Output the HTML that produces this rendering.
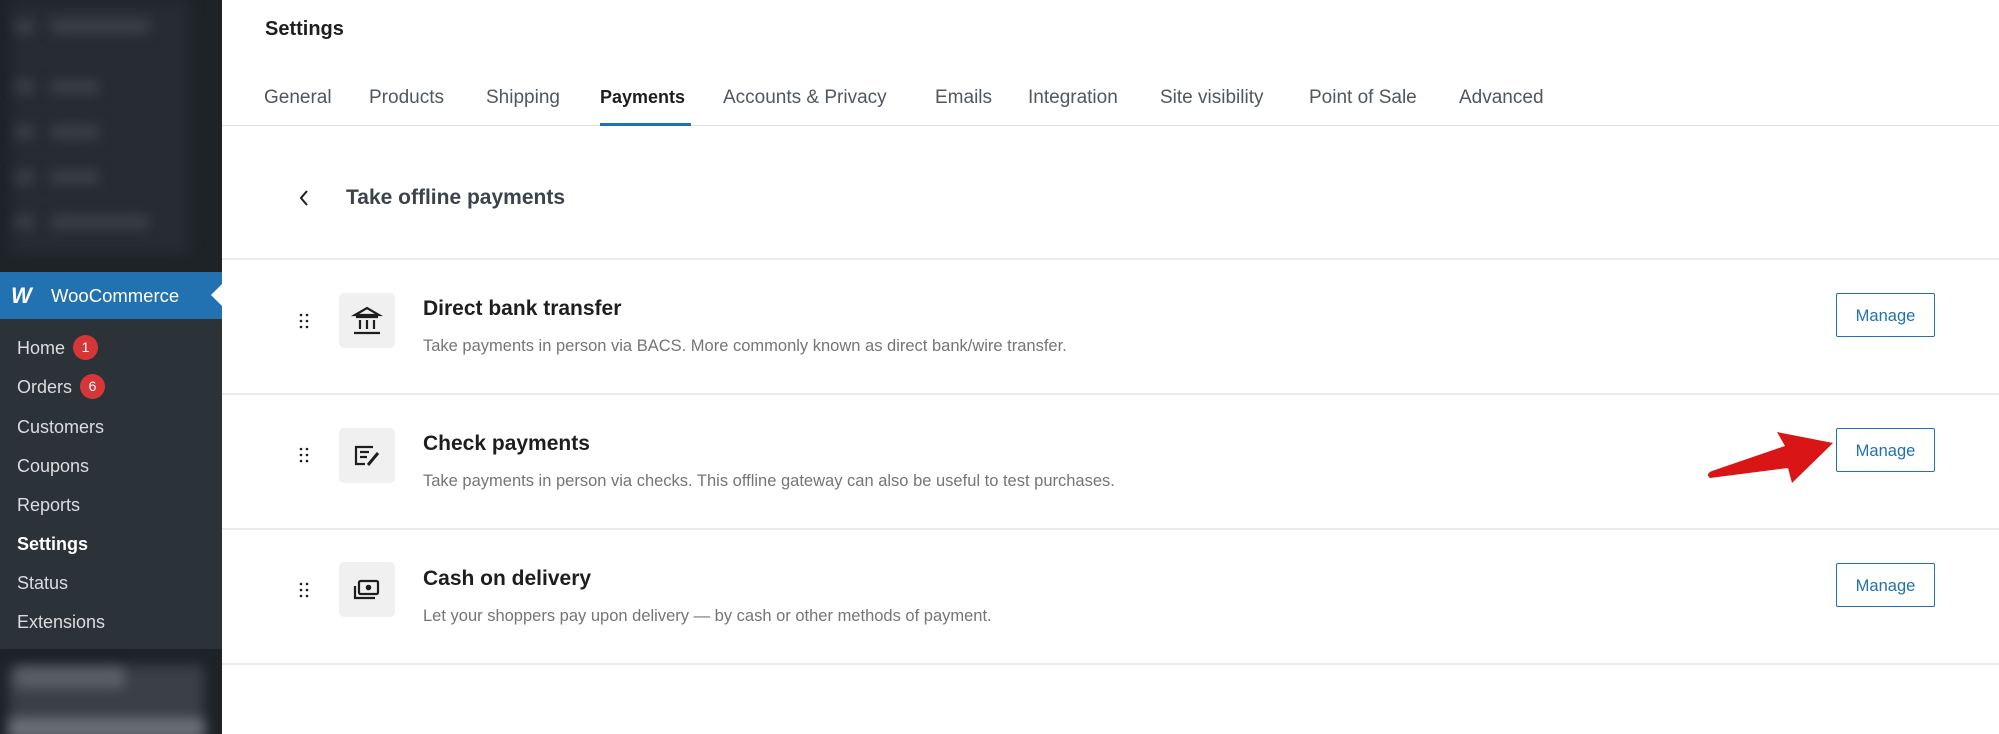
<!DOCTYPE html>
<html><head><meta charset="utf-8"><style>
*{margin:0;padding:0;box-sizing:border-box}
body{width:1999px;height:734px;overflow:hidden;background:#fff;font-family:"Liberation Sans",sans-serif;position:relative}
.abs{position:absolute;white-space:nowrap}
#sb{position:absolute;left:0;top:0;width:222px;height:734px;background:#1d2327;overflow:hidden}
.blur{position:absolute;background:#3a4046;filter:blur(6px);border-radius:6px}
#woo{position:absolute;left:0;top:272px;width:222px;height:47px;background:#2271b1;color:#fff;font-size:18.5px}
#sub{position:absolute;left:0;top:319px;width:222px;height:330px;background:#2c3338}
.mi{position:absolute;left:17px;font-size:18px;color:#dcdcde;line-height:20px;height:20px}
.badge{display:inline-block;width:25px;height:25px;border-radius:13px;background:#d63638;color:#fff;font-size:14px;text-align:center;line-height:25px;margin-left:8px;vertical-align:middle;margin-top:-4px}
.tab{position:absolute;top:87px;font-size:19px;color:#50575e}
.row-t{position:absolute;left:423px;font-size:21px;font-weight:bold;color:#1e1e1e}
.row-d{position:absolute;left:423px;font-size:16.5px;color:#757575}
.ib{position:absolute;left:339px;width:56px;height:55px;background:#f0f0f0;border-radius:5px}
.hr{position:absolute;left:222px;width:1777px;height:2px;background:#ebebeb}
.btn{position:absolute;left:1836px;width:99px;height:44px;border:1.5px solid #2271b1;border-radius:2px;color:#2271b1;font-size:16.5px;text-align:center;line-height:44px}
.drag{position:absolute;left:298px;width:12px;height:18px}
</style></head><body>
<div id="sb">
  <div class="blur" style="left:10px;top:0;width:180px;height:255px;background:#262c31"></div>
  <div class="blur" style="left:15px;top:20px;width:20px;height:14px"></div><div class="blur" style="left:50px;top:18px;width:100px;height:16px"></div>
  <div class="blur" style="left:15px;top:80px;width:20px;height:14px"></div><div class="blur" style="left:50px;top:80px;width:50px;height:14px"></div>
  <div class="blur" style="left:15px;top:125px;width:20px;height:14px"></div><div class="blur" style="left:50px;top:125px;width:50px;height:14px"></div>
  <div class="blur" style="left:15px;top:170px;width:20px;height:14px"></div><div class="blur" style="left:50px;top:170px;width:50px;height:14px"></div>
  <div class="blur" style="left:15px;top:215px;width:20px;height:14px"></div><div class="blur" style="left:50px;top:215px;width:100px;height:14px"></div>
  <div class="blur" style="left:9px;top:665px;width:195px;height:80px;background:#3a4046"></div>
  <div class="blur" style="left:15px;top:668px;width:110px;height:20px;background:#5a6066"></div>
  <div class="blur" style="left:9px;top:718px;width:195px;height:20px;background:#6a7076"></div>
</div>
<div id="woo">
  <span class="abs" style="left:11px;top:11px;font-size:22px;font-weight:bold;font-style:italic;letter-spacing:-2px">W</span>
  <span class="abs" style="left:51px;top:13px">WooCommerce</span>
  <div class="abs" style="left:211px;top:12px;width:0;height:0;border-top:11px solid transparent;border-bottom:11px solid transparent;border-right:11px solid #fff"></div>
</div>
<div id="sub"></div>
<div class="mi" style="top:338px">Home<span class="badge">1</span></div>
<div class="mi" style="top:377px">Orders<span class="badge">6</span></div>
<div class="mi" style="top:417px">Customers</div>
<div class="mi" style="top:456px">Coupons</div>
<div class="mi" style="top:495px">Reports</div>
<div class="mi" style="top:534px;color:#fff;font-weight:bold">Settings</div>
<div class="mi" style="top:573px">Status</div>
<div class="mi" style="top:612px">Extensions</div>

<div class="abs" style="left:265px;top:18px;font-size:20px;font-weight:bold;color:#1e1e1e">Settings</div>
<div class="tab" style="left:264px">General</div>
<div class="tab" style="left:369px">Products</div>
<div class="tab" style="left:486px">Shipping</div>
<div class="tab" style="left:600px;color:#1e1e1e;font-weight:bold;font-size:18px;top:87px">Payments</div>
<div class="tab" style="left:723px">Accounts &amp; Privacy</div>
<div class="tab" style="left:935px">Emails</div>
<div class="tab" style="left:1028px">Integration</div>
<div class="tab" style="left:1160px">Site visibility</div>
<div class="tab" style="left:1309px">Point of Sale</div>
<div class="tab" style="left:1459px">Advanced</div>
<div class="hr" style="top:125px;height:1px;background:#e0e0e0"></div>
<div class="abs" style="left:600px;top:123px;width:91px;height:3px;background:#2271b1"></div>

<svg class="abs" style="left:297px;top:188px" width="14" height="20" viewBox="0 0 14 20"><path d="M10 3 L4 10 L10 17" fill="none" stroke="#1e1e1e" stroke-width="2"/></svg>
<div class="abs" style="left:346px;top:186px;font-size:21px;font-weight:bold;color:#3c434a">Take offline payments</div>
<div class="hr" style="top:258px"></div>

<svg class="drag" style="top:312px" viewBox="0 0 12 18"><g fill="#1e1e1e"><circle cx="3" cy="3" r="1.3"/><circle cx="9" cy="3" r="1.3"/><circle cx="3" cy="9" r="1.3"/><circle cx="9" cy="9" r="1.3"/><circle cx="3" cy="15" r="1.3"/><circle cx="9" cy="15" r="1.3"/></g></svg>
<div class="ib" style="top:293px"><svg width="56" height="55" viewBox="0 0 56 55"><path d="M16 22 L28 15 L40 22 Z" fill="none" stroke="#1e1e1e" stroke-width="2.2"/><path d="M17 24h22M21 27v9M28 27v9M35 27v9M15 40h26" stroke="#1e1e1e" stroke-width="2.2"/></svg></div>
<div class="row-t" style="top:297px">Direct bank transfer</div>
<div class="row-d" style="top:337px">Take payments in person via BACS. More commonly known as direct bank/wire transfer.</div>
<div class="btn" style="top:293px">Manage</div>
<div class="hr" style="top:393px"></div>

<svg class="drag" style="top:446px" viewBox="0 0 12 18"><g fill="#1e1e1e"><circle cx="3" cy="3" r="1.3"/><circle cx="9" cy="3" r="1.3"/><circle cx="3" cy="9" r="1.3"/><circle cx="9" cy="9" r="1.3"/><circle cx="3" cy="15" r="1.3"/><circle cx="9" cy="15" r="1.3"/></g></svg>
<div class="ib" style="top:428px"><svg width="56" height="55" viewBox="0 0 56 55"><path d="M34 19H17v17h9M21 24h9M21 29h7" fill="none" stroke="#1e1e1e" stroke-width="2.2"/><path d="M29 37 L39 25" stroke="#1e1e1e" stroke-width="3"/></svg></div>
<div class="row-t" style="top:432px">Check payments</div>
<div class="row-d" style="top:472px">Take payments in person via checks. This offline gateway can also be useful to test purchases.</div>
<div class="btn" style="top:428px">Manage</div>
<div class="hr" style="top:528px"></div>

<svg class="drag" style="top:581px" viewBox="0 0 12 18"><g fill="#1e1e1e"><circle cx="3" cy="3" r="1.3"/><circle cx="9" cy="3" r="1.3"/><circle cx="3" cy="9" r="1.3"/><circle cx="9" cy="9" r="1.3"/><circle cx="3" cy="15" r="1.3"/><circle cx="9" cy="15" r="1.3"/></g></svg>
<div class="ib" style="top:562px"><svg width="56" height="55" viewBox="0 0 56 55"><rect x="20" y="19" width="19" height="13" rx="1.5" fill="none" stroke="#1e1e1e" stroke-width="2.2"/><circle cx="29.5" cy="25.5" r="2.8" fill="#1e1e1e"/><path d="M16 24v12h20" fill="none" stroke="#1e1e1e" stroke-width="2.2"/></svg></div>
<div class="row-t" style="top:567px">Cash on delivery</div>
<div class="row-d" style="top:607px">Let your shoppers pay upon delivery — by cash or other methods of payment.</div>
<div class="btn" style="top:563px">Manage</div>
<div class="hr" style="top:663px"></div>

<svg class="abs" style="left:0;top:0" width="1999" height="734"><path d="M1710 478 Q1705 474 1712 471 L1785 446 L1777 432 L1833 443 L1792 483 L1788 468 Z" fill="#d91515"/></svg>
</body></html>
